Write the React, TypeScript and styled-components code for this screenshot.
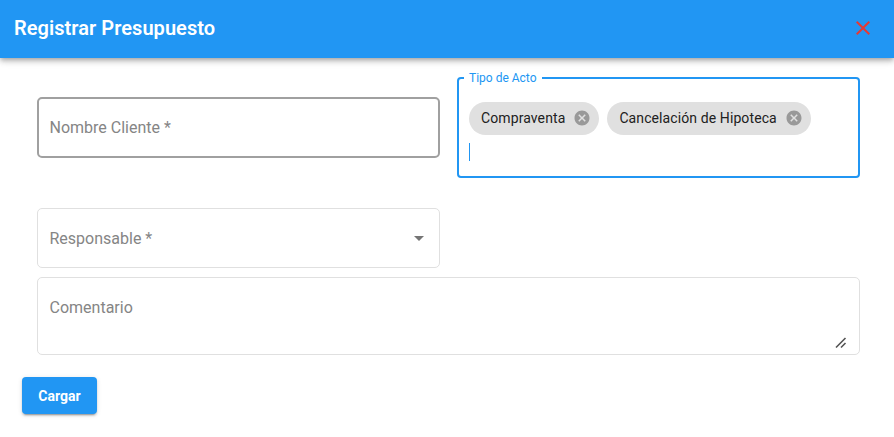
import styled, { createGlobalStyle } from 'styled-components';

const GlobalStyle = createGlobalStyle`
  html, body {
    margin: 0;
    padding: 0;
    background: #fff;
    font-family: Roboto, "Liberation Sans", sans-serif;
  }
`;

const Page = styled.div`
  width: 894px;
  height: 437px;
  overflow: hidden;
`;

const Header = styled.header`
  height: 58px;
  padding: 0 24px 2px 14px;
  display: flex;
  align-items: center;
  justify-content: space-between;
  box-sizing: border-box;
  background: #2196f3;
  box-shadow: 0 2px 4px -1px rgba(0, 0, 0, 0.2), 0 4px 5px 0 rgba(0, 0, 0, 0.14),
    0 1px 10px 0 rgba(0, 0, 0, 0.12);
  position: relative;
`;

const Title = styled.h2`
  margin: 0;
  font-size: 20px;
  font-weight: 600;
  letter-spacing: 0.05px;
  color: #fff;
`;

const CloseButton = styled.button`
  padding: 0;
  border: 0;
  background: none;
  color: #e53935;
  display: flex;
`;

const CloseIcon = styled.svg`
  width: 14px;
  height: 14px;
  fill: currentColor;
`;

const Form = styled.form`
  padding: 19px 34px 0 37px;
  display: grid;
  grid-template-columns: 403px 403px;
  column-gap: 17px;
`;

const Box = styled.div<{ $focused?: boolean; $height: number }>`
  height: ${(p) => p.$height}px;
  box-sizing: border-box;
  padding: 0 12px 0 11.5px;
  display: flex;
  align-items: center;
  justify-content: space-between;
  border: ${(p) => (p.$focused ? '2px solid #a0a0a0' : '1px solid #e0e0e0')};
  border-radius: 5px;
  background: #fff;
  font-size: 16px;
  color: #858585;
`;

const NameBox = styled(Box)`
  align-self: center;
  padding-left: 10.5px;
`;

const ActoField = styled.fieldset`
  margin: 0;
  height: 101px;
  box-sizing: border-box;
  padding: 0 10px;
  border: 2px solid #2196f3;
  border-radius: 4px;
  min-width: 0;
`;

const ActoLegend = styled.legend`
  margin-left: -5px;
  padding: 0 5px;
  height: 2px;
  font-size: 12px;
  line-height: 2px;
  color: #2196f3;
`;

const Chips = styled.div`
  display: flex;
  gap: 8px;
  margin-top: 23px;
`;

const Chip = styled.span`
  height: 33px;
  box-sizing: border-box;
  padding: 0 8px 1px 12px;
  display: inline-flex;
  align-items: center;
  gap: 8px;
  border-radius: 17px;
  background: #e0e0e0;
  color: #212121;
  font-size: 14px;
  font-weight: 450;
  letter-spacing: 0.1px;
`;

const ChipIcon = styled.svg`
  width: 18px;
  height: 18px;
  fill: #999;
`;

const Caret = styled.div`
  width: 1px;
  height: 18px;
  margin-top: 8px;
  background: #2196f3;
`;

const ResponsableBox = styled(Box)`
  margin-top: 30px;
`;

const Arrow = styled.svg`
  width: 24px;
  height: 24px;
  margin-right: -4px;
  fill: #757575;
`;

const CommentBox = styled(Box)`
  grid-column: 1 / span 2;
  margin-top: 9px;
  align-items: flex-start;
  padding-top: 21px;
  padding-bottom: 5px;
`;

const CommentText = styled.span`
  line-height: 18px;
`;

const Handle = styled.svg`
  width: 12px;
  height: 12px;
  align-self: flex-end;
  stroke: #555;
  stroke-width: 1.6;
`;

const Footer = styled.div`
  padding: 22px 0 0 22px;
`;

const SubmitButton = styled.button`
  width: 75px;
  height: 37px;
  padding: 0;
  border: 0;
  border-radius: 4px;
  background: #2196f3;
  color: #fff;
  font-family: inherit;
  font-size: 14px;
  font-weight: 700;
  box-shadow: 0 3px 1px -2px rgba(0, 0, 0, 0.2), 0 2px 2px 0 rgba(0, 0, 0, 0.14),
    0 1px 5px 0 rgba(0, 0, 0, 0.12);
`;

const cancelPath =
  'M12 2C6.47 2 2 6.47 2 12s4.47 10 10 10 10-4.47 10-10S17.53 2 12 2zm5 13.59L15.59 17 12 13.41 8.41 17 7 15.59 10.59 12 7 8.41 8.41 7 12 10.59 15.59 7 17 8.41 13.41 12 17 15.59z';

function App() {
  const actos = ['Compraventa', 'Cancelación de Hipoteca'];

  return (
    <Page>
      <GlobalStyle />
      <Header>
        <Title>Registrar Presupuesto</Title>
        <CloseButton type='button' aria-label='Cerrar'>
          <CloseIcon viewBox='5 5 14 14'>
            <path d='M19 6.41L17.59 5 12 10.59 6.41 5 5 6.41 10.59 12 5 17.59 6.41 19 12 13.41 17.59 19 19 17.59 13.41 12z' />
          </CloseIcon>
        </CloseButton>
      </Header>

      <Form>
        <NameBox $focused $height={61}>
          Nombre Cliente *
        </NameBox>
        <ActoField>
          <ActoLegend>Tipo de Acto</ActoLegend>
          <Chips>
            {actos.map((acto) => (
              <Chip key={acto}>
                {acto}
                <ChipIcon viewBox='0 0 24 24'>
                  <path d={cancelPath} />
                </ChipIcon>
              </Chip>
            ))}
          </Chips>
          <Caret />
        </ActoField>

        <ResponsableBox $height={60}>
          Responsable *
          <Arrow viewBox='0 0 24 24'>
            <path d='M7 10l5 5 5-5z' />
          </Arrow>
        </ResponsableBox>
        <div />

        <CommentBox $height={78}>
          <CommentText>Comentario</CommentText>
          <Handle viewBox='0 0 12 12'>
            <path d='M1 10.5L10.5 1M6 10.5L10.5 6' />
          </Handle>
        </CommentBox>
      </Form>

      <Footer>
        <SubmitButton type='button'>Cargar</SubmitButton>
      </Footer>
    </Page>
  );
}

export default App;
